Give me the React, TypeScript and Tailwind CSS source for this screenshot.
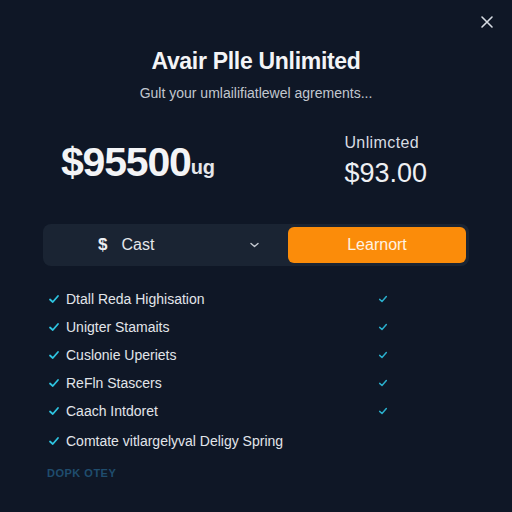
import React from "react";

const Check = ({ className }: { className?: string }) => (
  <svg viewBox="0 0 12 12" className={className} fill="none" stroke="currentColor" strokeWidth={1.8} strokeLinecap="round" strokeLinejoin="round">
    <path d="M2 6.5 L4.8 9 L10 3" />
  </svg>
);

const items: [string, boolean][] = [
  ["Dtall Reda Highisation", true],
  ["Unigter Stamaits", true],
  ["Cuslonie Uperiets", true],
  ["ReFln Stascers", true],
  ["Caach Intdoret", true],
  ["Comtate vitlargelyval Deligy Spring", false],
];

export default function App() {
  return (
    <div
      className="w-[512px] h-[512px] bg-[#0f1726] text-white relative overflow-hidden"
      style={{ fontFamily: "'Liberation Sans', Arial, sans-serif" }}
    >
      <button className="absolute right-[18px] top-[15px] text-[#d7dce3]">
        <svg width="14" height="14" viewBox="0 0 14 14" stroke="currentColor" strokeWidth={1.6} strokeLinecap="round">
          <path d="M2 2 L12 12 M12 2 L2 12" />
        </svg>
      </button>

      <div className="flex flex-col items-center pt-[46px]">
        <h1 className="text-[23px] leading-[30px] font-bold tracking-[-0.3px] text-[#f3f4f6]">Avair Plle Unlimited</h1>
        <p className="mt-[8px] text-[14px] leading-[18px] text-[#c2c7cf]">Gult your umlailifiatlewel agrements...</p>
      </div>

      <div className="flex items-start justify-between pl-[61px] pr-[85px] mt-[27px]">
        <div className="flex items-end mt-[12px]">
          <span className="text-[41px] leading-[42px] font-bold text-[#f3f4f6] tracking-[-1.2px]">$95500</span>
          <span className="text-[20px] leading-[20px] font-bold text-[#e5e7eb] mb-[6px]">ug</span>
        </div>
        <div className="flex flex-col mt-[4px]">
          <span className="text-[16px] leading-[20px] tracking-[0.4px] text-[#d8dce2]">Unlimcted</span>
          <span className="mt-[5px] text-[27px] leading-[30px] text-[#eef0f3]">$93.00</span>
        </div>
      </div>

      <div className="mx-[43px] mt-[36px] h-[42px] rounded-[8px] bg-[#1a2433] flex items-center p-[3px]">
        <div className="flex-1 flex items-center h-full pl-[52px] pr-[28px]">
          <span className="text-[17px] text-[#eef0f3] font-bold">$</span>
          <span className="ml-[14px] text-[16px] text-[#e5e7eb]">Cast</span>
          <span className="ml-auto text-[#c5cad2]">
            <svg width="11" height="8" viewBox="0 0 11 8" fill="none" stroke="currentColor" strokeWidth={1.4} strokeLinecap="round" strokeLinejoin="round">
              <path d="M2 2.5 L5.5 5.5 L9 2.5" />
            </svg>
          </span>
        </div>
        <div className="w-[178px] h-[36px] rounded-[6px] bg-[#fb8c0a] flex items-center justify-center text-[16px] text-[#fff3e3]">
          Learnort
        </div>
      </div>

      <div className="mt-[19px] pl-[48px] pr-[124px] flex flex-col">
        {items.map(([t, r], i) => (
          <div key={i} className={`flex items-center h-[28px] ${i === 5 ? "mt-[2px]" : ""}`}>
            <Check className="w-[12px] h-[12px] text-[#2ec4e0]" />
            <span className="ml-[6px] text-[14px] text-[#e2e5ea]">{t}</span>
            {r && <Check className="ml-auto w-[10px] h-[10px] text-[#2aaecb]" />}
          </div>
        ))}
      </div>

      <div className="pl-[47px] mt-[10px] text-[11px] font-bold tracking-[0.5px] text-[#1f4d6e]">DOPK OTEY</div>
    </div>
  );
}
